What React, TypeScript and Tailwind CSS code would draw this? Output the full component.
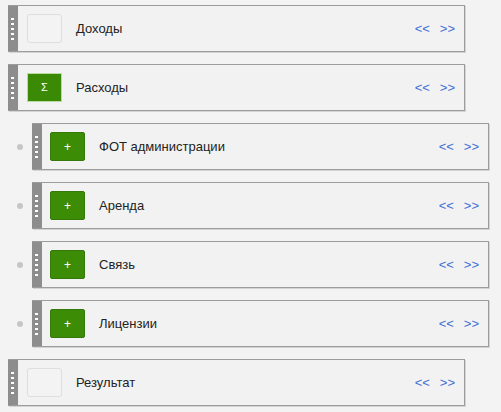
import React from 'react';

type Row = { title: string; kind: 'empty' | 'sum' | 'plus'; child?: boolean };

const rows: Row[] = [
  { title: 'Доходы', kind: 'empty' },
  { title: 'Расходы', kind: 'sum' },
  { title: 'ФОТ администрации', kind: 'plus', child: true },
  { title: 'Аренда', kind: 'plus', child: true },
  { title: 'Связь', kind: 'plus', child: true },
  { title: 'Лицензии', kind: 'plus', child: true },
  { title: 'Результат', kind: 'empty' },
];

const Handle: React.FC = () => (
  <div className="flex w-[10px] shrink-0 flex-col items-center justify-center gap-[3px] bg-[#8d8d8d] pr-[1px]">
    {[0, 1, 2, 3, 4].map((i) => (
      <span key={i} className="block h-[2px] w-[3px] bg-white" />
    ))}
  </div>
);

const Badge: React.FC<{ kind: Row['kind'] }> = ({ kind }) => {
  if (kind === 'empty') {
    return <div className="h-[29px] w-[35px] rounded-[3px] border border-[#dedede] bg-[#f3f3f3]" />;
  }
  if (kind === 'sum') {
    return (
      <div className="flex h-[29px] w-[35px] items-center justify-center border border-[#b8dca0] bg-[#3b8a05] text-[11px] text-white">
        Σ
      </div>
    );
  }
  return (
    <div className="flex h-[29px] w-[35px] items-center justify-center rounded-[2px] border border-[#34790a] bg-[#3d8c06] text-[12px] text-white">
      +
    </div>
  );
};

const RowItem: React.FC<{ row: Row }> = ({ row }) => (
  <div className={`flex items-center ${row.child ? 'pl-[17px]' : 'pl-[8px]'}`}>
    {row.child && <span className="mr-[9px] block h-[6px] w-[6px] rounded-full bg-[#c6c6c6]" />}
    <div className="flex h-[47px] w-[457px] border-y border-r border-[#9c9c9c] bg-[#f2f2f2] shadow-[1px_1px_0_#d4d4d4]">
      <Handle />
      <div className={`flex flex-1 items-center ${row.child ? 'pl-[8px]' : 'pl-[9px]'} pr-[9px]`}>
        <Badge kind={row.kind} />
        <span className="ml-[14px] flex-1 text-[13px] text-[#222]">{row.title}</span>
        <div className="flex gap-[10px] text-[13px] text-[#3f6fd6]">
          <span>&lt;&lt;</span>
          <span>&gt;&gt;</span>
        </div>
      </div>
    </div>
  </div>
);

export default function App() {
  return (
    <div
      className="flex h-[412px] w-[501px] flex-col gap-[12px] bg-[#f3f3f3] pt-[5px]"
      style={{ fontFamily: '"Liberation Sans", Arial, sans-serif' }}
    >
      {rows.map((r) => (
        <RowItem key={r.title} row={r} />
      ))}
    </div>
  );
}
